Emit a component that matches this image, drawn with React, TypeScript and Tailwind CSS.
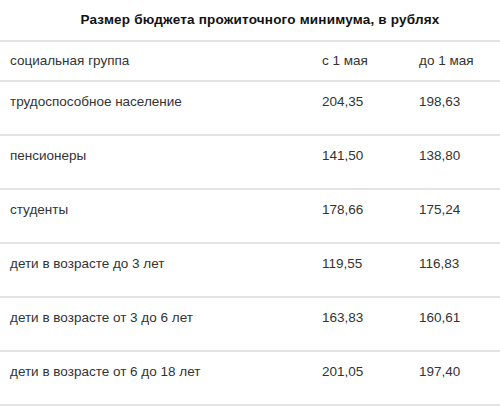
const rows = [
  { group: "трудоспособное население", from: "204,35", before: "198,63" },
  { group: "пенсионеры", from: "141,50", before: "138,80" },
  { group: "студенты", from: "178,66", before: "175,24" },
  { group: "дети в возрасте до 3 лет", from: "119,55", before: "116,83" },
  { group: "дети в возрасте от 3 до 6 лет", from: "163,83", before: "160,61" },
  { group: "дети в возрасте от 6 до 18 лет", from: "201,05", before: "197,40" },
];

const App = () => {
  return (
    <div className="h-[412px] w-[500px] overflow-hidden bg-white font-['Liberation_Sans',Arial,sans-serif] text-[13.5px] text-[#333]">
      <div className="flex h-[40px] items-center justify-center pl-[20px] font-bold tracking-[0.2px] text-[#111]">
        Размер бюджета прожиточного минимума, в рублях
      </div>
      <div className="flex h-[42px] items-center border-y-2 border-[#e3e3e3] leading-[16px]">
        <div className="w-[322px] pl-[10px]">социальная группа</div>
        <div className="w-[97px]">с 1 мая</div>
        <div>до 1 мая</div>
      </div>
      {rows.map(row => (
        <div key={row.group} className="flex h-[54px] border-b-2 border-[#e3e3e3] pt-[12px] leading-[16px]">
          <div className="w-[322px] pl-[10px]">{row.group}</div>
          <div className="w-[97px]">{row.from}</div>
          <div>{row.before}</div>
        </div>
      ))}
    </div>
  );
};

export default App;
